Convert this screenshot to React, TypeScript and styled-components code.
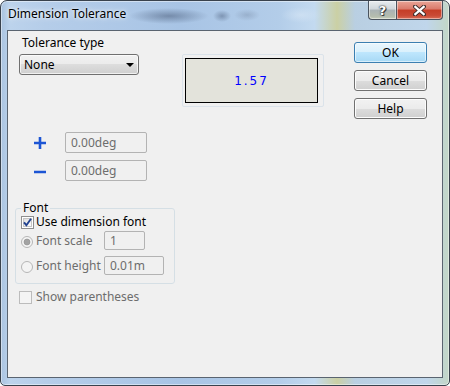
import React from "react";
import styled, { createGlobalStyle } from "styled-components";

const GlobalStyle = createGlobalStyle`
  html, body { margin: 0; padding: 0; }
  body {
    font-family: "Noto Sans", "DejaVu Sans", sans-serif;
    font-size: 12px;
    color: #000;
  }
  * { box-sizing: border-box; }
`;

const Window = styled.div`
  width: 450px;
  height: 386px;
  border: 1px solid #39424d;
  border-radius: 7px 7px 5px 5px;
  overflow: hidden;
  display: flex;
  flex-direction: column;
  background:
    radial-gradient(ellipse 40px 8px at 168px 15px, rgba(95, 115, 145, 0.7), rgba(95, 115, 145, 0)),
    radial-gradient(ellipse 9px 6px at 221px 15px, rgba(95, 115, 145, 0.6), rgba(95, 115, 145, 0)),
    radial-gradient(ellipse 13px 6px at 246px 14px, rgba(125, 145, 172, 0.45), rgba(125, 145, 172, 0)),
    radial-gradient(ellipse 20px 8px at 300px 14px, rgba(215, 230, 245, 0.6), rgba(215, 230, 245, 0)),
    linear-gradient(90deg, #a9c3e0 0, #bcd3ec 2%, #b5cde9 10%, #a8c4e5 40%, #b3cde9 62%, #c3daf0 70%,
      #cbd0a4 75%, #b9cfe2 79%, #c0d6eb 95%, #c2d6c6 100%);
  box-shadow: inset 0 0 0 1px rgba(255, 255, 255, 0.45);
`;

const TitleBar = styled.div`
  height: 29px;
  display: flex;
  align-items: flex-start;
  padding-left: 7px;
`;

const Title = styled.span`
  margin-top: 5px;
  line-height: 16px;
  text-shadow: 0 0 6px rgba(255, 255, 255, 0.9), 0 0 3px rgba(255, 255, 255, 0.8);
`;

const CaptionButtons = styled.div`
  margin-left: auto;
  margin-right: 6px;
  display: flex;
`;

const CaptionButton = styled.div<{ $close?: boolean }>`
  height: 19px;
  width: ${(p) => (p.$close ? "47px" : "28px")};
  border: 1px solid #4a535e;
  border-top: none;
  border-right: ${(p) => (p.$close ? "1px solid #4a535e" : "none")};
  border-radius: ${(p) => (p.$close ? "0 0 4px 0" : "0 0 0 4px")};
  display: flex;
  align-items: center;
  justify-content: center;
  color: #fff;
  font-family: "DejaVu Sans", sans-serif;
  font-weight: bold;
  font-size: 13px;
  text-shadow: 0 0 1px #222, 0 0 2px #333, 1px 1px 0 #444;
  background: ${(p) =>
    p.$close
      ? "linear-gradient(#e9a597 0%, #d9796a 45%, #c53d26 50%, #c94a35 80%, #d96c55 100%)"
      : "linear-gradient(#e8ecef 0%, #cfd6db 45%, #aab3b5 50%, #b4bcae 85%, #c7ceba 100%)"};
  box-shadow: inset 0 0 0 1px rgba(255, 255, 255, 0.45);
`;

const Client = styled.div`
  flex: 1;
  margin: 0 6px 7px 6px;
  border: 1px solid #5a6470;
  background: #f0f0f0;
  display: flex;
  flex-direction: column;
`;

const TopRow = styled.div`
  display: grid;
  grid-template-columns: 174px 142px 1fr;
  align-items: start;
  padding-right: 15px;
`;

const TypeColumn = styled.div`
  padding-left: 11px;
  margin-top: 4px;
  display: flex;
  flex-direction: column;
`;

const Label = styled.div`
  padding-left: 3px;
  line-height: 16px;
`;

const Dropdown = styled.div`
  margin-top: 3px;
  width: 120px;
  height: 21px;
  border: 1px solid #707070;
  border-radius: 3px;
  background: linear-gradient(#f2f2f2 0%, #ebebeb 50%, #dddddd 50%, #cfcfcf 100%);
  box-shadow: inset 0 0 0 1px rgba(255, 255, 255, 0.7);
  display: flex;
  align-items: center;
  justify-content: space-between;
  padding: 0 4px 0 4px;
  line-height: 16px;
`;

const Arrow = styled.span`
  width: 0;
  height: 0;
  border-left: 4px solid transparent;
  border-right: 4px solid transparent;
  border-top: 4px solid #000;
`;

const Preview = styled.div`
  margin-top: 23px;
  width: 142px;
  height: 53px;
  border: 1px solid #dbe3ea;
  border-radius: 2px;
  padding: 3px 5px 3px 2px;
`;

const PreviewInner = styled.div`
  height: 100%;
  border: 1px solid #000;
  background: #e3e3db;
  display: flex;
  align-items: center;
  justify-content: center;
  color: #0000ff;
  font-family: "DejaVu Sans", sans-serif;
  font-size: 12px;
  letter-spacing: 2px;
`;

const ButtonColumn = styled.div`
  justify-self: end;
  margin-top: 11px;
  display: flex;
  flex-direction: column;
  gap: 7px;
`;

const PushButton = styled.div<{ $default?: boolean }>`
  width: 73px;
  height: 21px;
  border: 1px solid ${(p) => (p.$default ? "#3c7fb1" : "#707070")};
  border-radius: 3px;
  display: flex;
  align-items: center;
  justify-content: center;
  line-height: 16px;
  background: ${(p) =>
    p.$default
      ? "linear-gradient(#eaf6fd 0%, #d9f0fc 50%, #bee6fd 50%, #a7d9f5 100%)"
      : "linear-gradient(#f2f2f2 0%, #ebebeb 50%, #dddddd 50%, #cfcfcf 100%)"};
  box-shadow: inset 0 0 0 1px ${(p) => (p.$default ? "rgba(255,255,255,0.55)" : "#fcfcfc")};
`;

const SignSection = styled.div`
  margin-top: 13px;
  display: flex;
  flex-direction: column;
  gap: 7px;
`;

const SignRow = styled.div`
  height: 21px;
  display: flex;
  align-items: center;
  padding-left: 26px;
`;

const SignIcon = styled.svg`
  width: 12px;
  height: 12px;
  margin-right: 19px;
  flex: none;
`;

const TextBox = styled.div<{ $w: number; $h?: number }>`
  width: ${(p) => p.$w}px;
  height: ${(p) => p.$h ?? 21}px;
  border: 1px solid #b3b3b3;
  border-radius: 2px;
  background: #f0f0f0;
  color: #6d6d6d;
  padding-left: 5px;
  display: flex;
  align-items: center;
  line-height: 16px;
`;

const Group = styled.fieldset`
  margin: 20px 0 0 7px;
  width: 160px;
  border: 1px solid #d5dfe5;
  border-radius: 3px;
  padding: 0 5px 8px 5px;
  min-width: 0;
`;

const Legend = styled.legend`
  padding: 0 2px;
  margin: 0;
  line-height: 14px;
`;

const CheckRow = styled.div<{ $disabled?: boolean }>`
  height: 14px;
  display: flex;
  align-items: center;
  gap: 2px;
  line-height: 16px;
  color: ${(p) => (p.$disabled ? "#6d6d6d" : "#000")};
`;

const RadioRow = styled.div<{ $first?: boolean }>`
  height: 19px;
  margin-top: ${(p) => (p.$first ? 2 : 6)}px;
  display: grid;
  grid-template-columns: 15px 68px auto;
  align-items: center;
  color: #6d6d6d;
  line-height: 16px;
`;

const Box = styled.svg`
  width: 13px;
  height: 13px;
  flex: none;
`;

const Radio = styled.svg`
  width: 12px;
  height: 12px;
  margin-top: 2px;
`;

const BottomRow = styled(CheckRow)`
  margin-top: 6px;
  padding-left: 11px;
  gap: 4px;
`;

const CheckBox = ({ checked, disabled }: { checked?: boolean; disabled?: boolean }) => (
  <Box viewBox="0 0 13 13">
    <defs>
      <linearGradient id="cbg" x1="0" y1="0" x2="1" y2="1">
        <stop offset="0" stopColor="#dcdcdc" />
        <stop offset="1" stopColor="#ffffff" />
      </linearGradient>
    </defs>
    <rect x="0.5" y="0.5" width="12" height="12" fill={disabled ? "#f4f4f4" : "#fff"} stroke={disabled ? "#bcbcbc" : "#8e8f8f"} />
    {!disabled && <rect x="2.5" y="2.5" width="8" height="8" fill="url(#cbg)" stroke="#c5c5c5" />}
    {checked && <path d="M3 6.3 L5.4 9.2 L10 2.8" fill="none" stroke="#21428f" strokeWidth="1.9" />}
  </Box>
);

const RadioDot = ({ checked }: { checked?: boolean }) => (
  <Radio viewBox="0 0 12 12">
    <circle cx="6" cy="6" r="5.5" fill="#f4f4f4" stroke="#b6b6b6" />
    {checked && <circle cx="6" cy="6" r="3" fill="#a3a3a3" stroke="#8d8d8d" strokeWidth="0.6" />}
  </Radio>
);

export default function App() {
  return (
    <>
      <GlobalStyle />
      <Window>
        <TitleBar>
          <Title>Dimension Tolerance</Title>
          <CaptionButtons>
            <CaptionButton>?</CaptionButton>
            <CaptionButton $close>
              <svg width="13" height="11" viewBox="0 0 13 11">
                <path d="M2 1.5 L11 9.5 M11 1.5 L2 9.5" stroke="#3a2a28" strokeWidth="4" strokeLinecap="round" />
                <path d="M2.3 1.8 L10.7 9.2 M10.7 1.8 L2.3 9.2" stroke="#fff" strokeWidth="2.2" strokeLinecap="square" />
              </svg>
            </CaptionButton>
          </CaptionButtons>
        </TitleBar>
        <Client>
          <TopRow>
            <TypeColumn>
              <Label>Tolerance type</Label>
              <Dropdown>
                <span>None</span>
                <Arrow />
              </Dropdown>
            </TypeColumn>
            <Preview>
              <PreviewInner>1.57</PreviewInner>
            </Preview>
            <ButtonColumn>
              <PushButton $default>OK</PushButton>
              <PushButton>Cancel</PushButton>
              <PushButton>Help</PushButton>
            </ButtonColumn>
          </TopRow>

          <SignSection>
            <SignRow>
              <SignIcon viewBox="0 0 12 12">
                <path d="M0 6 H12 M6 0 V12" stroke="#1c55d4" strokeWidth="2.6" />
              </SignIcon>
              <TextBox $w={82}>0.00deg</TextBox>
            </SignRow>
            <SignRow>
              <SignIcon viewBox="0 0 12 12">
                <path d="M0 7 H12" stroke="#1c55d4" strokeWidth="2.6" />
              </SignIcon>
              <TextBox $w={82}>0.00deg</TextBox>
            </SignRow>
          </SignSection>

          <Group>
            <Legend>Font</Legend>
            <CheckRow>
              <CheckBox checked />
              <span>Use dimension font</span>
            </CheckRow>
            <RadioRow $first>
              <RadioDot checked />
              <span>Font scale</span>
              <TextBox $w={41} $h={19}>1</TextBox>
            </RadioRow>
            <RadioRow>
              <RadioDot />
              <span>Font height</span>
              <TextBox $w={60} $h={19}>0.01m</TextBox>
            </RadioRow>
          </Group>

          <BottomRow $disabled>
            <CheckBox disabled />
            <span>Show parentheses</span>
          </BottomRow>
        </Client>
      </Window>
    </>
  );
}
